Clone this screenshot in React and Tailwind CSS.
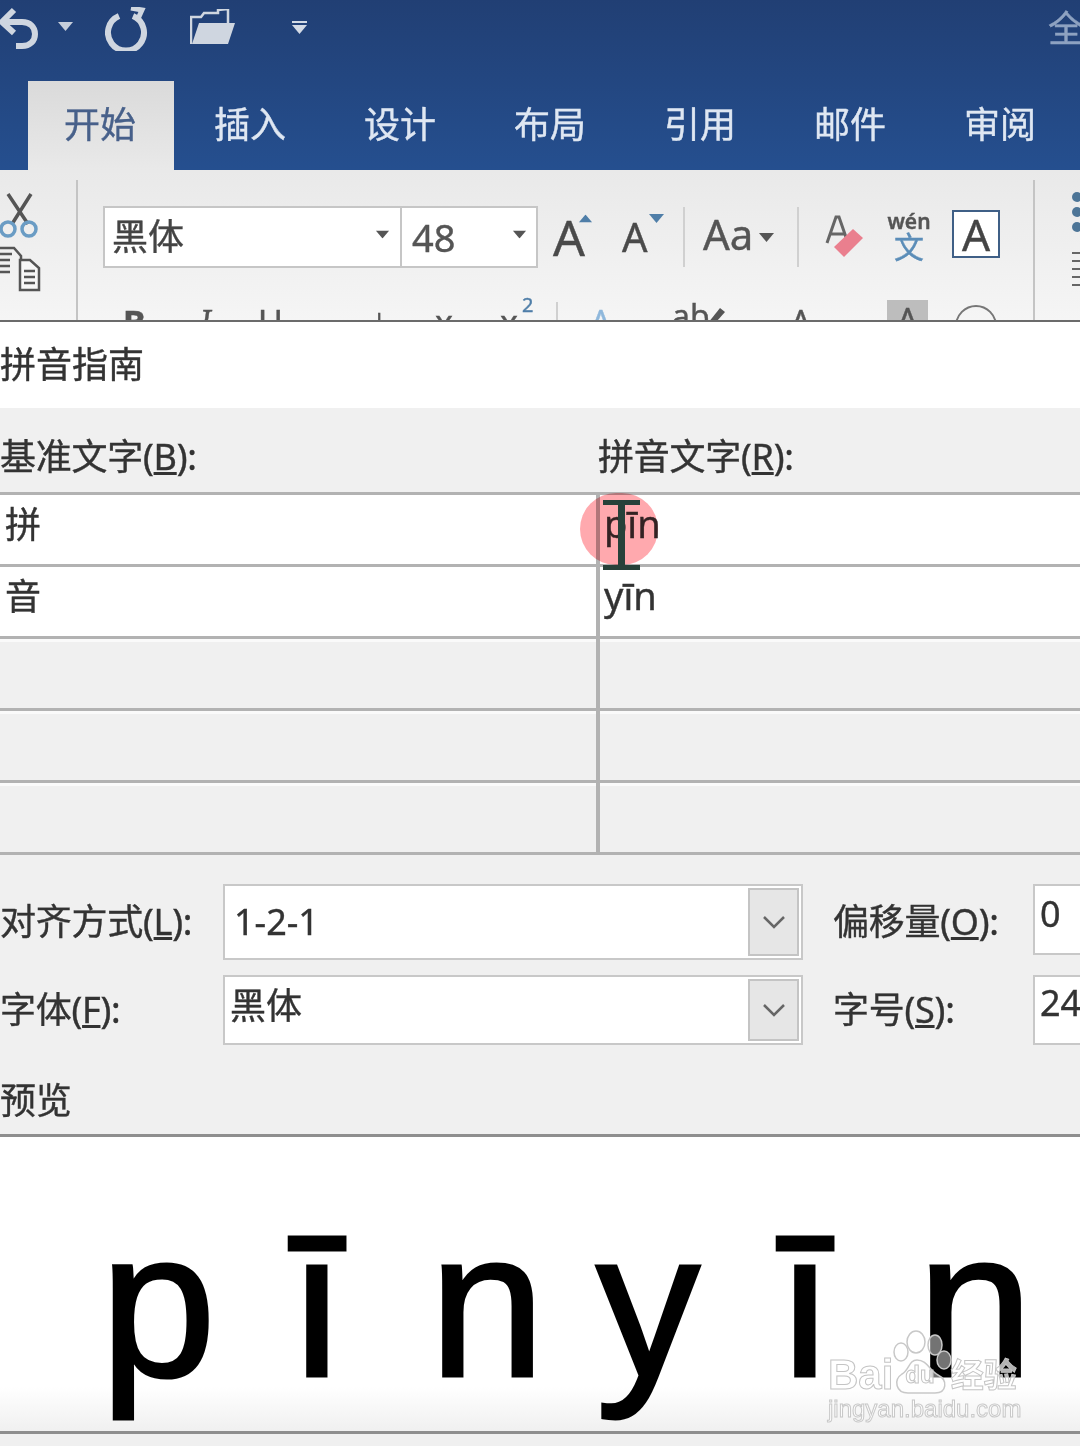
import React from 'react';

const cjk = { fontFamily: '"Noto Sans","Noto Sans CJK SC",sans-serif' };

const Caret = ({ className = '' }) => (
	<svg width="15" height="9" viewBox="0 0 15 9" className={className}>
		<path d="M0 0h15L7.5 9z" fill="currentColor" />
	</svg>
);

const Tab = ({ children }) => (
	<div className="w-[150px] shrink-0 pl-[40px] pt-[19px] text-[36px] leading-[50px] text-[#dfe7f2]">
		{children}
	</div>
);

const QuickAccess = () => (
	<div className="relative flex h-[81px] items-center pb-[24px] text-[#cfd6e0]">
		<svg width="40" height="44" viewBox="0 0 40 44" fill="none" className="-mt-[4px] shrink-0">
			<path d="M2 17h20c8 0 13 5 13 12s-5 12-13 12h-6" stroke="currentColor" strokeWidth="6" />
			<path d="M14 5 2 17l12 11" stroke="currentColor" strokeWidth="6" />
		</svg>
		<Caret className="ml-[18px] -mt-[4px] shrink-0 text-[#c6cedb]" />
		<svg width="44" height="44" viewBox="0 0 44 44" fill="none" className="ml-[32px] shrink-0">
			<path d="M14 9a18 18 0 1 0 14 0" stroke="currentColor" strokeWidth="6" />
			<path d="M26 1l11 2-5 11" fill="none" stroke="currentColor" strokeWidth="5" />
		</svg>
		<svg width="46" height="36" viewBox="0 0 46 36" className="ml-[41px] -mt-[4px] shrink-0">
			<path d="M1 35V8h10l3-4h14V1l10-1v14" fill="none" stroke="currentColor" strokeWidth="2.5" />
			<path d="M2 35l7-21h36l-7 21z" fill="currentColor" />
		</svg>
		<div className="ml-[56px] -mt-[2px] flex shrink-0 flex-col gap-[2px]">
			<div className="h-[2px] w-[15px] bg-[#d4dbe6]" />
			<Caret className="text-[#d4dbe6]" />
		</div>
		<div className="ml-auto -mr-[4px] text-[36px] leading-[50px] text-[#8ea2c1]">全</div>
	</div>
);

const FontBox = () => (
	<div className="flex h-[62px] w-[435px] border-2 border-[#c6c6c6] bg-white text-[#444]">
		<div className="flex w-[297px] items-center border-r-2 border-[#c6c6c6] pl-[7px] pr-[10px] text-[36px]">
			<span>黑体</span>
			<Caret className="ml-auto -mt-[6px] scale-90 text-[#555]" />
		</div>
		<div className="flex flex-1 items-center pl-[10px] pr-[9px] text-[38px] text-[#555]">
			<span>48</span>
			<Caret className="ml-auto -mt-[6px] scale-90 text-[#555]" />
		</div>
	</div>
);

const FontTools = () => (
	<div className="flex h-[62px] items-center text-[#4a4a4a]">
		<div className="relative ml-[15px] w-[40px] text-[50px] leading-[62px]">
			A
			<Caret className="absolute right-0 top-[8px] rotate-180 scale-90 text-[#4f7ea8]" />
		</div>
		<div className="relative ml-[29px] w-[40px] text-[40px] leading-[62px]">
			A
			<Caret className="absolute right-[-2px] top-[8px] text-[#4f7ea8]" />
		</div>
		<div className="ml-[21px] h-[60px] w-[2px] bg-[#d0d0d0]" />
		<div className="ml-[18px] -mt-[6px] flex w-[72px] items-center text-[42px] leading-[62px] text-[#555]">
			Aa
			<Caret className="ml-[6px] mt-[6px] shrink-0 text-[#555]" />
		</div>
		<div className="ml-[22px] h-[60px] w-[2px] bg-[#d0d0d0]" />
		<svg width="40" height="46" viewBox="0 0 40 46" className="ml-[26px] -mt-[3px]">
			<path d="M2 30 11 4h3l9 26M6 21h13" fill="none" stroke="#666" strokeWidth="3" />
			<path d="M9 34 28 16l10 9-19 19z" fill="#ea7f8e" />
		</svg>
		<div className="ml-[22px] -mt-[3px] flex w-[44px] flex-col items-center">
			<span className="text-[21px] font-semibold leading-[22px] text-[#555]">wén</span>
			<span className="text-[30px] leading-[30px] text-[#5b8db8]">文</span>
		</div>
		<div className="ml-[21px] -mt-[6px] flex h-[48px] w-[48px] items-center justify-center border-2 border-[#3f5f86] bg-white text-[44px] leading-none text-[#444]">
			A
		</div>
	</div>
);

const FormatRow = () => (
	<div className="mt-[34px] flex h-[44px] items-start text-[34px] leading-[40px] text-[#555]">
		<span className="ml-[20px] w-[77px] font-bold">B</span>
		<span className="w-[58px] font-serif italic">I</span>
		<span className="w-[114px]">U</span>
		<span className="w-[63px] text-[26px]">|</span>
		<span className="w-[65px]">x</span>
		<span className="relative w-[56px]">
			x<sup className="absolute left-[22px] top-[3px] text-[20px] text-[#4f7ea8]">2</sup>
		</span>
		<span className="h-[30px] w-[34px] border-l-2 border-[#d0d0d0]" />
		<span className="w-[82px] text-[#8fb8dc]">A</span>
		<span className="relative -mt-[6px] w-[118px] text-[32px]">
			ab
			<svg width="24" height="24" viewBox="0 0 24 24" className="absolute left-[30px] top-[8px]">
				<path d="M2 24 18 4l5 4L7 26z" fill="#555" />
			</svg>
		</span>
		<span className="w-[97px]">A</span>
		<span className="mr-[27px] mt-[-2px] h-[45px] w-[41px] bg-[#bdbdbd] text-center">A</span>
		<span className="mt-[3px] h-[42px] w-[42px] rounded-full border-2 border-[#777]" />
	</div>
);

const Ribbon = () => (
	<div className="flex h-[150px] overflow-hidden bg-gradient-to-b from-[#e9e9e9] to-[#f5f5f5] pt-[10px]">
		<div className="flex w-[78px] shrink-0 flex-col border-r-2 border-[#c4c4c4]">
			<svg width="40" height="46" viewBox="0 0 40 46" fill="none" strokeWidth="3.5" className="mt-[12px] shrink-0">
				<path d="M8 2l20 30M31 2 12 32" stroke="#555" />
				<circle cx="8" cy="37" r="7" stroke="#6a9cc4" />
				<circle cx="29" cy="37" r="7" stroke="#6a9cc4" />
			</svg>
			<svg width="42" height="46" viewBox="0 0 42 46" fill="none" stroke="#555" strokeWidth="2.5" className="mt-[8px] shrink-0">
				<path d="M0 2h14l7 8v8M0 8h12M0 14h10M0 20h10M0 26h10" />
				<path d="M20 14h10l9 8v22H20zM24 25h11M24 31h11M24 37h11" fill="#f7f7f7" />
			</svg>
		</div>
		<div className="w-[955px] shrink-0 pl-[25px] pt-[26px]">
			<div className="flex">
				<FontBox />
				<FontTools />
			</div>
			<FormatRow />
		</div>
		<div className="flex flex-1 flex-col border-l-2 border-[#c4c4c4] pl-[37px] pt-[12px]">
			<span className="h-[10px] w-[10px] shrink-0 rounded-full bg-[#4d7597]" />
			<span className="mt-[5px] h-[10px] w-[10px] shrink-0 rounded-full bg-[#4d7597]" />
			<span className="mt-[5px] h-[10px] w-[10px] shrink-0 rounded-full bg-[#4d7597]" />
			<div className="mt-[20px] flex w-[10px] shrink-0 flex-col gap-[6px]">
				<span className="h-[2px] bg-[#666]" />
				<span className="h-[2px] bg-[#666]" />
				<span className="h-[2px] bg-[#666]" />
				<span className="h-[2px] bg-[#666]" />
				<span className="h-[2px] bg-[#666]" />
			</div>
		</div>
	</div>
);

const GridRow = ({ base, ruby, empty }) => (
	<div
		className={`flex h-[72px] border-b-[3px] border-[#b2b2b2] ${
			empty ? 'bg-[#f0f0f0] shadow-[inset_0_3px_0_#fafafa]' : 'bg-white'
		}`}
	>
		<div className="w-[600px] shrink-0 border-r-[4px] border-[#b2b2b2] pl-[5px] pt-[5px] text-[36px] leading-[50px] text-[#333]">
			{base}
		</div>
		<div className="flex-1 pl-[4px] pt-[3px] text-[38px] leading-[50px] text-[#333]">{ruby}</div>
	</div>
);

const SelectRow = ({ label, value, valueClass, rowClass, sideLabel, sideValue, sideClass }) => (
	<div className={`flex ${rowClass}`}>
		<div className="flex w-[223px] shrink-0 items-center whitespace-nowrap text-[36px] tracking-[-0.25px] text-[#333]">
			{label}
		</div>
		<div className="flex w-[580px] shrink-0 border-2 border-[#c8c8c8] bg-white p-[2px]">
			<div className={`flex-1 text-[36px] leading-[50px] text-[#333] ${valueClass}`}>{value}</div>
			<div className="flex w-[51px] items-center justify-center border-2 border-[#c4c4c4] bg-[#e6e6e6]">
				<svg width="24" height="14" viewBox="0 0 24 14" fill="none" stroke="#666" strokeWidth="2.5">
					<path d="M2 2l10 10L22 2" />
				</svg>
			</div>
		</div>
		<div className="ml-[30px] flex w-[200px] shrink-0 items-center whitespace-nowrap text-[36px] tracking-[-0.25px] text-[#333]">
			{sideLabel}
		</div>
		<div className={`-mr-[20px] flex-1 border-2 border-[#c8c8c8] bg-white pl-[5px] text-[36px] leading-[50px] text-[#333] ${sideClass}`}>
			{sideValue}
		</div>
	</div>
);

const previewLetters = [
	{ ch: 'p', w: 'w-[160px]' },
	{ ch: 'ī', w: 'w-[158px]' },
	{ ch: 'n', w: 'w-[182px]' },
	{ ch: 'y', w: 'w-[140px]' },
	{ ch: 'ī', w: 'w-[174px]' },
	{ ch: 'n', w: 'w-[166px]' },
];

const Preview = () => (
	<div className="relative h-[300px] overflow-hidden border-y-[3px] border-[#8e8e8e] bg-gradient-to-b from-white from-[85%] to-[#f0f0f0]">
		<div
			className="flex pl-[78px] pt-[63px] text-[208px] leading-[208px] text-black [-webkit-text-stroke:3px_#000]"
			style={{ fontFamily: '"Liberation Sans",sans-serif' }}
		>
			{previewLetters.map((item, i) => (
				<span key={i} className={`${item.w} shrink-0 text-center`}>
					{item.ch}
				</span>
			))}
		</div>
	</div>
);

const Watermark = () => (
	<div className="absolute left-[828px] top-[1330px] w-[200px]" style={{ fontFamily: '"Liberation Sans","Noto Sans CJK SC",sans-serif' }}>
		<svg width="70" height="68" viewBox="0 0 70 68" className="absolute left-[62px] top-0" fill="#ffffff" fillOpacity="0.45" stroke="#c8c8c8" strokeWidth="1.5">
			<ellipse cx="26" cy="12" rx="9" ry="11" />
			<ellipse cx="5" cy="22" rx="7" ry="9" transform="translate(6 0)" />
			<ellipse cx="45" cy="15" rx="7" ry="10" />
			<ellipse cx="54" cy="30" rx="7" ry="9" />
			<path d="M27 30c10 0 13 11 21 15 10 5 9 18-3 18H18C6 63 3 50 12 44c7-4 7-14 15-14z" />
		</svg>
		<div className="relative mt-[26px] flex h-[38px] items-center text-[42px] font-bold leading-none text-white/70 [-webkit-text-stroke:1px_#c4c4c4]">
			<span>Bai</span>
			<span className="ml-[12px] text-[24px]">du</span>
			<span className="ml-[16px] text-[33px]">经验</span>
		</div>
		<div className="relative mt-[2px] text-[24px] leading-[26px] text-white/70 [-webkit-text-stroke:1px_#c8c8c8]">
			jingyan.baidu.com
		</div>
	</div>
);

const IBeamCursor = () => (
	<div className="absolute left-[580px] top-[493px] h-[72px] w-[78px]">
		<div className="absolute inset-0 rounded-full bg-[#ffa9ae] mix-blend-multiply" />
		<svg width="40" height="70" viewBox="0 0 40 70" className="absolute left-[22px] top-[7px]" fill="#27413a">
			<path d="M1 0h37v5H23v60h15v5H1v-5h15V5H1z" />
		</svg>
	</div>
);

const App = () => {
	return (
		<div
			className="relative h-[1446px] w-[1080px] overflow-hidden bg-[#f0f0f0] blur-[0.6px] [-webkit-text-stroke:0.4px_currentColor]"
			style={cjk}
		>
			<div className="bg-gradient-to-b from-[#213f74] to-[#254f8f]">
				<QuickAccess />
				<div className="flex h-[89px] overflow-hidden pl-[28px]">
					<div className="w-[146px] shrink-0 bg-gradient-to-b from-[#dadada] to-[#e9e9e9] pl-[36px] pt-[19px] text-[36px] leading-[50px] text-[#47608a]">
						开始
					</div>
					<Tab>插入</Tab>
					<Tab>设计</Tab>
					<Tab>布局</Tab>
					<Tab>引用</Tab>
					<Tab>邮件</Tab>
					<Tab>审阅</Tab>
				</div>
			</div>
			<Ribbon />
			<div className="h-[2px] bg-[#6b6b6b]" />
			<div className="flex h-[86px] items-center bg-white text-[36px] text-[#333]">拼音指南</div>
			<div className="flex h-[84px] items-end pb-[10px] text-[36px] leading-[50px] tracking-[-0.25px] text-[#333]">
				<div className="w-[598px] shrink-0">
					基准文字(<u>B</u>):
				</div>
				<div>
					拼音文字(<u>R</u>):
				</div>
			</div>
			<div className="border-t-[3px] border-[#b2b2b2]">
				<GridRow base="拼" ruby="pīn" />
				<GridRow base="音" ruby="yīn" />
				<GridRow empty />
				<GridRow empty />
				<GridRow empty />
			</div>
			<div className="mt-[29px]">
				<SelectRow
					label={<span>对齐方式(<u>L</u>):</span>}
					value="1-2-1"
					valueClass="pl-[7px] pt-[9px]"
					rowClass="h-[76px]"
					sideLabel={<span>偏移量(<u>O</u>):</span>}
					sideValue="0"
					sideClass="h-[71px] pt-[3px]"
				/>
				<SelectRow
					label={<span>字体(<u>F</u>):</span>}
					value="黑体"
					valueClass="pl-[3px] pt-[2px]"
					rowClass="mt-[15px] h-[70px]"
					sideLabel={<span>字号(<u>S</u>):</span>}
					sideValue="24"
					sideClass="h-[70px] pt-[1px]"
				/>
			</div>
			<div className="flex h-[89px] items-end pb-[8px] text-[36px] leading-[50px] tracking-[-0.25px] text-[#333]">预览</div>
			<Preview />
			<IBeamCursor />
			<Watermark />
		</div>
	);
};

export default App;
